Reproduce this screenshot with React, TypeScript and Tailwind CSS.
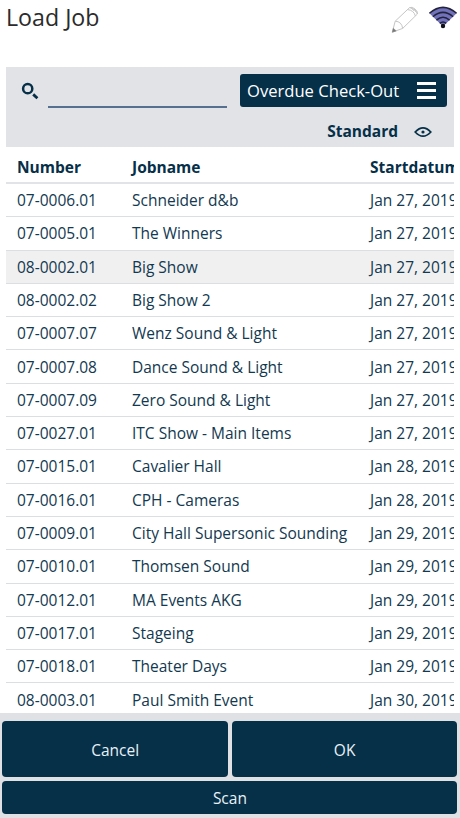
const jobs = [
  ["07-0006.01", "Schneider d&b", "Jan 27, 2019"],
  ["07-0005.01", "The Winners", "Jan 27, 2019"],
  ["08-0002.01", "Big Show", "Jan 27, 2019"],
  ["08-0002.02", "Big Show 2", "Jan 27, 2019"],
  ["07-0007.07", "Wenz Sound & Light", "Jan 27, 2019"],
  ["07-0007.08", "Dance Sound & Light", "Jan 27, 2019"],
  ["07-0007.09", "Zero Sound & Light", "Jan 27, 2019"],
  ["07-0027.01", "ITC Show - Main Items", "Jan 27, 2019"],
  ["07-0015.01", "Cavalier Hall", "Jan 28, 2019"],
  ["07-0016.01", "CPH - Cameras", "Jan 28, 2019"],
  ["07-0009.01", "City Hall Supersonic Sounding", "Jan 29, 2019"],
  ["07-0010.01", "Thomsen Sound", "Jan 29, 2019"],
  ["07-0012.01", "MA Events AKG", "Jan 29, 2019"],
  ["07-0017.01", "Stageing", "Jan 29, 2019"],
  ["07-0018.01", "Theater Days", "Jan 29, 2019"],
  ["08-0003.01", "Paul Smith Event", "Jan 30, 2019"],
];

function PencilIcon() {
  return (
    <svg width="30" height="30" viewBox="0 0 30 30" fill="none" stroke="#c6c6c6" strokeWidth="1" strokeLinejoin="round">
      <path d="M2.3 27.2 5.2 16.2 19.6 2.6Q22 1.4 25 4T27.4 9L12.7 23.4Z" />
      <path d="M5.2 16.2Q11.6 16.4 12.7 23.4M17.6 4.6Q23.8 5.2 25.4 11M19.6 2.6Q26 4 27.4 9M21.2 2.6l2.6 3.2M24 3.8l2 3.2" />
      <path d="m2.3 27.2 1-3.9 2.9 2.6Z" fill="#777" stroke="#888" strokeWidth=".6" />
    </svg>
  );
}

function WifiIcon() {
  return (
    <svg width="30" height="25" viewBox="0 0 30 25" fill="none">
      <path d="M1.4 8.2Q15-3.4 28.6 8.2L15 21.5Z" fill="#7272bc" />
      <path d="M1.4 8.2Q15-3.4 28.6 8.2M4.9 11.7Q15 3 25.1 11.7M8.4 15.1Q15 9.4 21.6 15.1M11.8 18.4Q15 15.6 18.2 18.4" stroke="#22223a" strokeWidth="1.5" />
      <circle cx="15" cy="21" r="2.2" fill="#101018" />
    </svg>
  );
}

function SearchIcon() {
  return (
    <svg width="18" height="18" viewBox="0 0 18 18" fill="none" stroke="#062f48">
      <circle cx="6.7" cy="6.7" r="4.6" strokeWidth="2.5" />
      <path d="m12.2 12.4 4.2 3.9" strokeWidth="2.8" />
    </svg>
  );
}

function EyeIcon() {
  return (
    <svg width="18" height="12" viewBox="0 0 18 12" fill="none" stroke="#062f48">
      <path d="M1.2 6Q9-2.4 16.8 6Q9 14.4 1.2 6Z" strokeWidth="1.8" />
      <circle cx="9" cy="6" r="1.6" fill="#062f48" stroke="none" />
    </svg>
  );
}

export default function App() {
  return (
    <div className="flex h-[818px] w-[460px] flex-col overflow-hidden bg-white font-['Open_Sans',sans-serif] text-[15.5px] text-[#123950]">
      <header className="flex h-[67px] shrink-0 items-start justify-between pl-1.5 pr-[2px]">
        <h1 className="text-[23.2px] leading-[34px] text-[#2b2b2b]">Load Job</h1>
        <div className="flex items-start gap-[8px] pt-[5px]">
          <PencilIcon />
          <WifiIcon />
        </div>
      </header>

      <main className="mx-1.5 flex min-h-0 flex-1 flex-col overflow-hidden">
        <section className="h-20 shrink-0 bg-[#e1e3e7] pt-[7px]">
          <div className="flex pl-[15px] pr-[7px]">
            <div className="pt-[8px]">
              <SearchIcon />
            </div>
            <input aria-label="Search" className="ml-[9px] h-[34px] w-[179px] border-b-2 border-[#55718f] bg-transparent outline-none" />
            <button className="ml-auto flex h-[33px] w-[207px] items-center justify-between rounded-[3px] bg-[#062f48] pl-[7px] pr-[11px] text-[16.6px] text-white">
              <span className="whitespace-nowrap pt-[2px]">Overdue Check-Out</span>
              <span className="flex w-[19px] flex-col gap-[4px]">
                <span className="h-[3px] bg-white" />
                <span className="h-[3px] bg-white" />
                <span className="h-[3px] bg-white" />
              </span>
            </button>
          </div>
          <div className="mt-[9px] flex h-[30px] items-center justify-end gap-4 pr-[22px] font-bold text-[#062f48]">
            <span>Standard</span>
            <EyeIcon />
          </div>
        </section>

        <div className="grid h-[37px] shrink-0 grid-cols-[115px_238px_1fr] items-center overflow-hidden whitespace-nowrap border-b-2 border-[#e1e3e6] pl-[11px] pt-[6px] font-bold text-[#062f48]">
          <span>Number</span>
          <span>Jobname</span>
          <span className="w-0">Startdatum</span>
        </div>
        {jobs.map(([number, name, date], i) => (
          <div
            key={number}
            className={`grid h-[33.3px] shrink-0 grid-cols-[115px_238px_1fr] items-center overflow-hidden whitespace-nowrap border-b border-[#dcdfe2] pl-[11px] pt-[1.2px] ${i === 2 ? "bg-[#f0f0f0]" : ""}`}
          >
            <span>{number}</span>
            <span>{name}</span>
            <span className="w-0">{date}</span>
          </div>
        ))}
      </main>

      <footer className="grid h-[105px] shrink-0 grid-cols-2 grid-rows-[56px_33px] gap-x-[4px] gap-y-[4px] bg-[#dfe1e5] pl-[2.4px] pr-[2.6px] pt-2 text-[#e8f2f7]">
        <button className="rounded-[4px] bg-[#062f48] pt-[3px]">Cancel</button>
        <button className="rounded-[4px] bg-[#062f48] pt-[3px]">OK</button>
        <button className="col-span-2 rounded-[4px] bg-[#062f48] pt-[3px]">Scan</button>
      </footer>
    </div>
  );
}
